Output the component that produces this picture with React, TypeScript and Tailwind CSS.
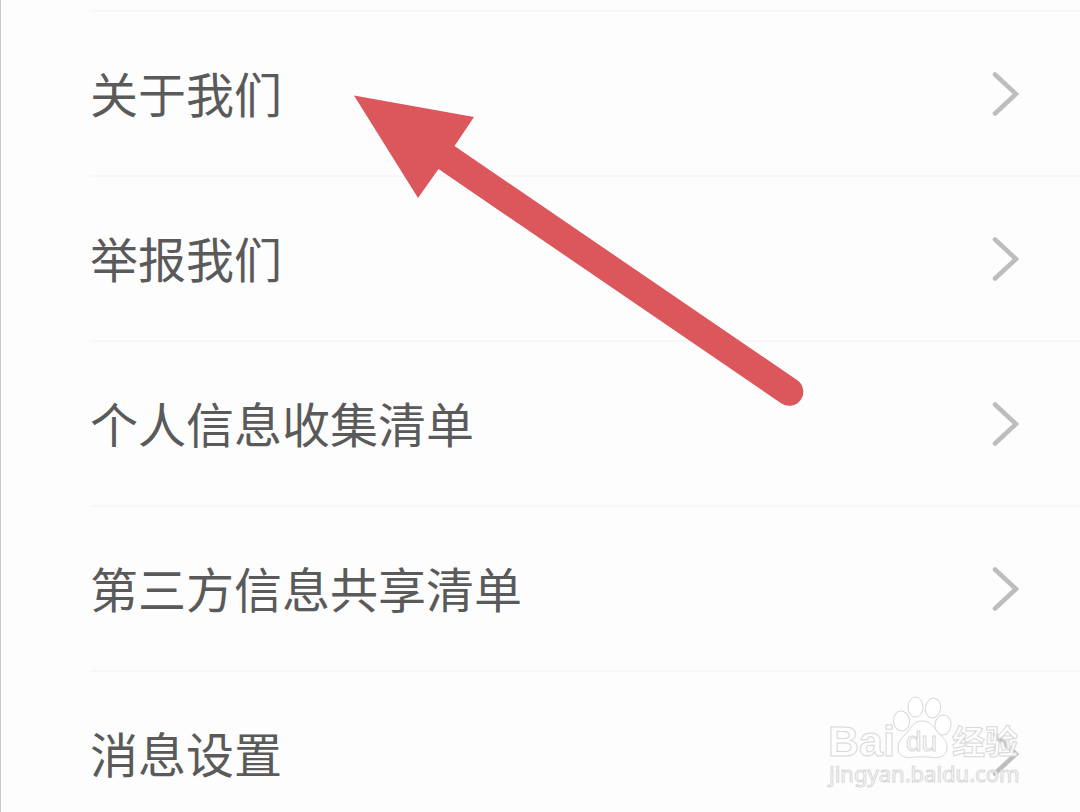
const settings = [
  { label: "关于我们", href: "#about" },
  { label: "举报我们", href: "#report" },
  { label: "个人信息收集清单", href: "#personal-info" },
  { label: "第三方信息共享清单", href: "#third-party" },
  { label: "消息设置", href: "#messages" },
];

const Chevron = () => (
  <svg
    viewBox="0 0 28 46"
    className="h-[46px] w-7 shrink-0"
    fill="none"
    stroke="#bdbdbd"
    strokeWidth="4.5"
    strokeLinecap="round"
    aria-hidden="true"
  >
    <path d="M4 3.5 L25 23 L4 42.500" />
  </svg>
);

// Red pointer that marks the first entry
const Arrow = () => (
  <svg
    viewBox="0 0 450 312"
    className="pointer-events-none absolute top-[95px] left-[353px] h-[312px] w-[450px]"
    aria-hidden="true"
  >
    <path
      d="M0 0.5 L120 22 L100.5 51 L443 285 A13.7 13.7 0 0 1 427.5 308.5 L84.5 74 L64 103 Z"
      fill="#db575b"
    />
  </svg>
);

const Watermark = () => (
  <svg
    viewBox="0 0 200 100"
    className="pointer-events-none absolute right-[56px] bottom-[18px] h-[100px] w-[200px]"
    fill="#ffffff"
    fillOpacity="0.85"
    stroke="#d8d8d8"
    strokeWidth="1"
    role="img"
    aria-label="Baidu 经验"
  >
    {/* Paw */}
    <ellipse cx="77.500" cy="27" rx="8" ry="10" transform="rotate(-8 77.5 27)" />
    <ellipse cx="91.500" cy="13" rx="7.500" ry="10" />
    <ellipse cx="109" cy="14" rx="7.500" ry="10" transform="rotate(10 109 14)" />
    <ellipse cx="119" cy="31" rx="8" ry="10" transform="rotate(8 119 31)" />
    <path d="M98 27 C92 27 88 31 85 36 C81 42 74 45 74 54 C74 61 80 64 86 63.500 C94 62.500 102 62.500 110 63.500 C117 64 123 61 123 53 C123 45 116 42 112 36 C108 30 104 27 98 27 Z" />
    <text x="4" y="62" fontSize="43" fontWeight="700" fontFamily="'Liberation Sans', sans-serif">
      Bai
    </text>
    <text x="82" y="57" fontSize="28" fontFamily="'Liberation Sans', sans-serif">
      du
    </text>
    <text x="128" y="60" fontSize="33" fontWeight="700" fontFamily="'Noto Sans CJK SC', sans-serif">
      经验
    </text>
    <text x="5" y="88" fontSize="22" fontFamily="'Noto Sans', sans-serif">
      jingyan.baidu.com
    </text>
  </svg>
);

const SettingsPage = () => {
  return (
    <main className="relative h-screen overflow-hidden border-l border-[#cccccc] bg-[#fdfdfd] pt-[10px] font-['Noto_Sans_CJK_SC',sans-serif]">
      <nav aria-label="设置">
        <ul className="pl-[89px]">
          {settings.map((item) => (
            <li key={item.href} className="border-t-2 border-[#f7f7f7]">
              <a
                href={item.href}
                className="flex h-[163px] items-center justify-between pr-[61px] text-[48px] leading-[72px] text-[#5a5a5a]"
              >
                <span className="pb-1">{item.label}</span>
                <Chevron />
              </a>
            </li>
          ))}
        </ul>
      </nav>
      <Arrow />
      <Watermark />
    </main>
  );
};

export default SettingsPage;
